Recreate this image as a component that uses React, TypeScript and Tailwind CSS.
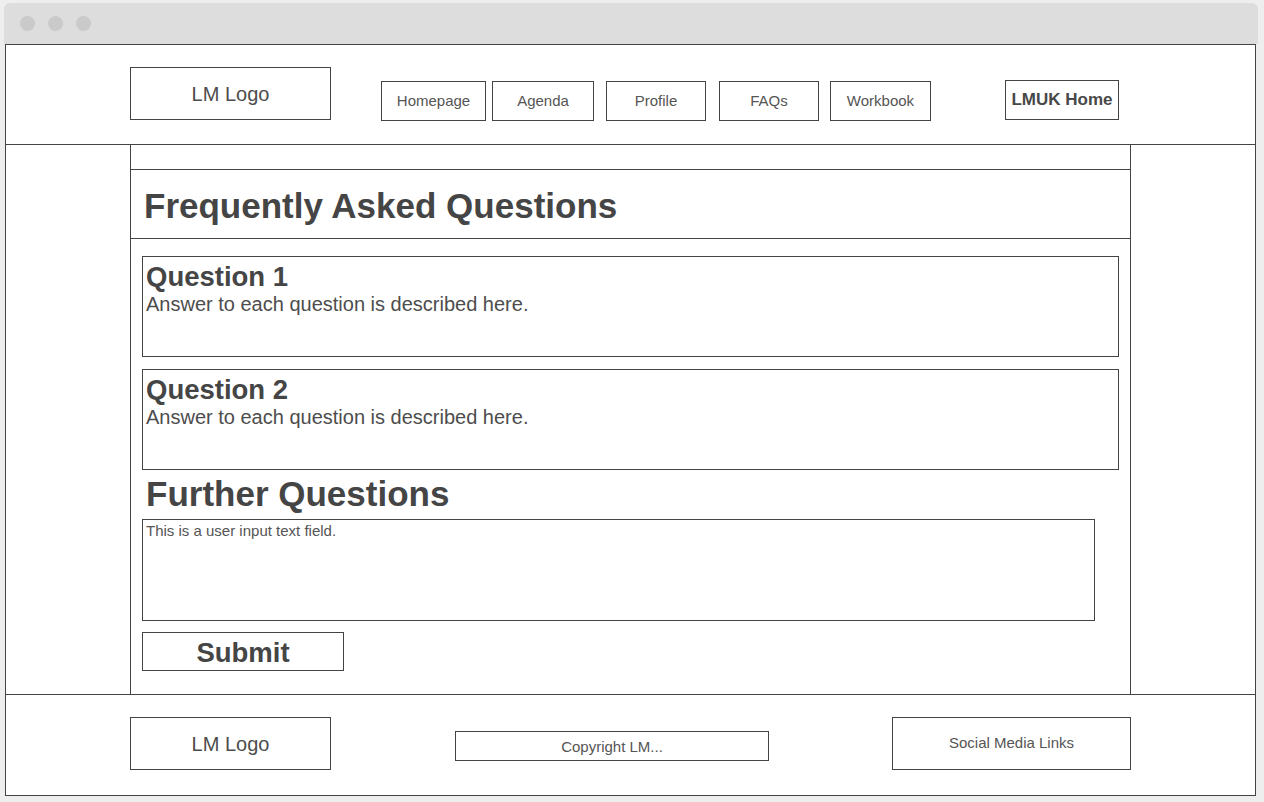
import React from "react";

const font = { fontFamily: '"Liberation Sans", Arial, sans-serif' };

function NavBox({ label, w, ml }: { label: string; w: string; ml: string }) {
  return (
    <div className={`${w} ${ml} mt-[36px] h-[40px] border border-[#444] flex items-center justify-center text-[15px] text-[#555] shrink-0`}>
      {label}
    </div>
  );
}

export default function App() {
  return (
    <div style={font} className="w-[1264px] h-[802px] bg-[#eeeeee] overflow-hidden">
      <div className="pt-[3px] pl-[4px]">
        <div className="w-[1254px] h-[41px] bg-[#dddddd] rounded-t-[6px] flex items-center pl-[16px] gap-[13px]">
          <div className="w-[15px] h-[15px] rounded-full bg-[#cacaca]" />
          <div className="w-[15px] h-[15px] rounded-full bg-[#cacaca]" />
          <div className="w-[15px] h-[15px] rounded-full bg-[#cacaca]" />
        </div>
      </div>
      <div className="ml-[5px] w-[1251px] h-[752px] border border-[#444] bg-white flex flex-col text-[#454545]">
        {/* Header */}
        <div className="h-[100px] border-b border-[#444] flex items-start shrink-0">
          <div className="ml-[124px] mt-[22px] w-[201px] h-[53px] border border-[#444] flex items-center justify-center text-[20px] text-[#4d4d4d] shrink-0">
            LM Logo
          </div>
          <NavBox label="Homepage" w="w-[105px]" ml="ml-[50px]" />
          <NavBox label="Agenda" w="w-[102px]" ml="ml-[6px]" />
          <NavBox label="Profile" w="w-[100px]" ml="ml-[12px]" />
          <NavBox label="FAQs" w="w-[100px]" ml="ml-[13px]" />
          <NavBox label="Workbook" w="w-[101px]" ml="ml-[11px]" />
          <div className="ml-[74px] mt-[35px] w-[114px] h-[40px] border border-[#444] flex items-center justify-center text-[17px] font-bold text-[#484848] shrink-0">
            LMUK Home
          </div>
        </div>

        {/* Main */}
        <div className="h-[550px] border-b border-[#444] flex shrink-0">
          <div className="w-[124px] shrink-0" />
          <div className="w-[1001px] h-full border-x border-[#444] flex flex-col">
            <div className="h-[25px] border-b border-[#444] shrink-0" />
            <div className="h-[69px] border-b border-[#444] flex items-center pl-[13px] pt-[4px] shrink-0">
              <h1 className="text-[35px] leading-[40px] font-bold">Frequently Asked Questions</h1>
            </div>
            <div className="px-[11px] pt-[17px] flex flex-col">
              <div className="h-[101px] border border-[#444] pl-[3px] pt-[4px]">
                <div className="text-[27.5px] leading-[31px] font-bold">Question 1</div>
                <div className="mt-[1px] text-[20px] leading-[23px] text-[#4d4d4d]">Answer to each question is described here.</div>
              </div>
              <div className="mt-[12px] h-[101px] border border-[#444] pl-[3px] pt-[4px]">
                <div className="text-[27.5px] leading-[31px] font-bold">Question 2</div>
                <div className="mt-[1px] text-[20px] leading-[23px] text-[#4d4d4d]">Answer to each question is described here.</div>
              </div>
              <h2 className="mt-[4px] pl-[4px] text-[35px] leading-[40px] font-bold">Further Questions</h2>
              <div className="mt-[5px] w-[953px] h-[102px] border border-[#444] pl-[3px] pt-[2px] text-[15px] leading-[17px] text-[#555]">
                This is a user input text field.
              </div>
              <div className="mt-[11px] w-[202px] h-[39px] border border-[#444] flex items-center justify-center pt-[3px] text-[27.5px] font-bold">
                Submit
              </div>
            </div>
          </div>
        </div>

        {/* Footer */}
        <div className="flex-1 flex items-start">
          <div className="ml-[124px] mt-[22px] w-[201px] h-[53px] border border-[#444] flex items-center justify-center text-[20px] text-[#4d4d4d] shrink-0">
            LM Logo
          </div>
          <div className="ml-[124px] mt-[36px] w-[314px] h-[30px] border border-[#444] flex items-center justify-center text-[15px] text-[#555] pt-[2px] shrink-0">
            Copyright LM...
          </div>
          <div className="ml-[123px] mt-[22px] w-[239px] h-[53px] border border-[#444] flex items-center justify-center text-[15px] text-[#555] shrink-0">
            Social Media Links
          </div>
        </div>
      </div>
    </div>
  );
}
